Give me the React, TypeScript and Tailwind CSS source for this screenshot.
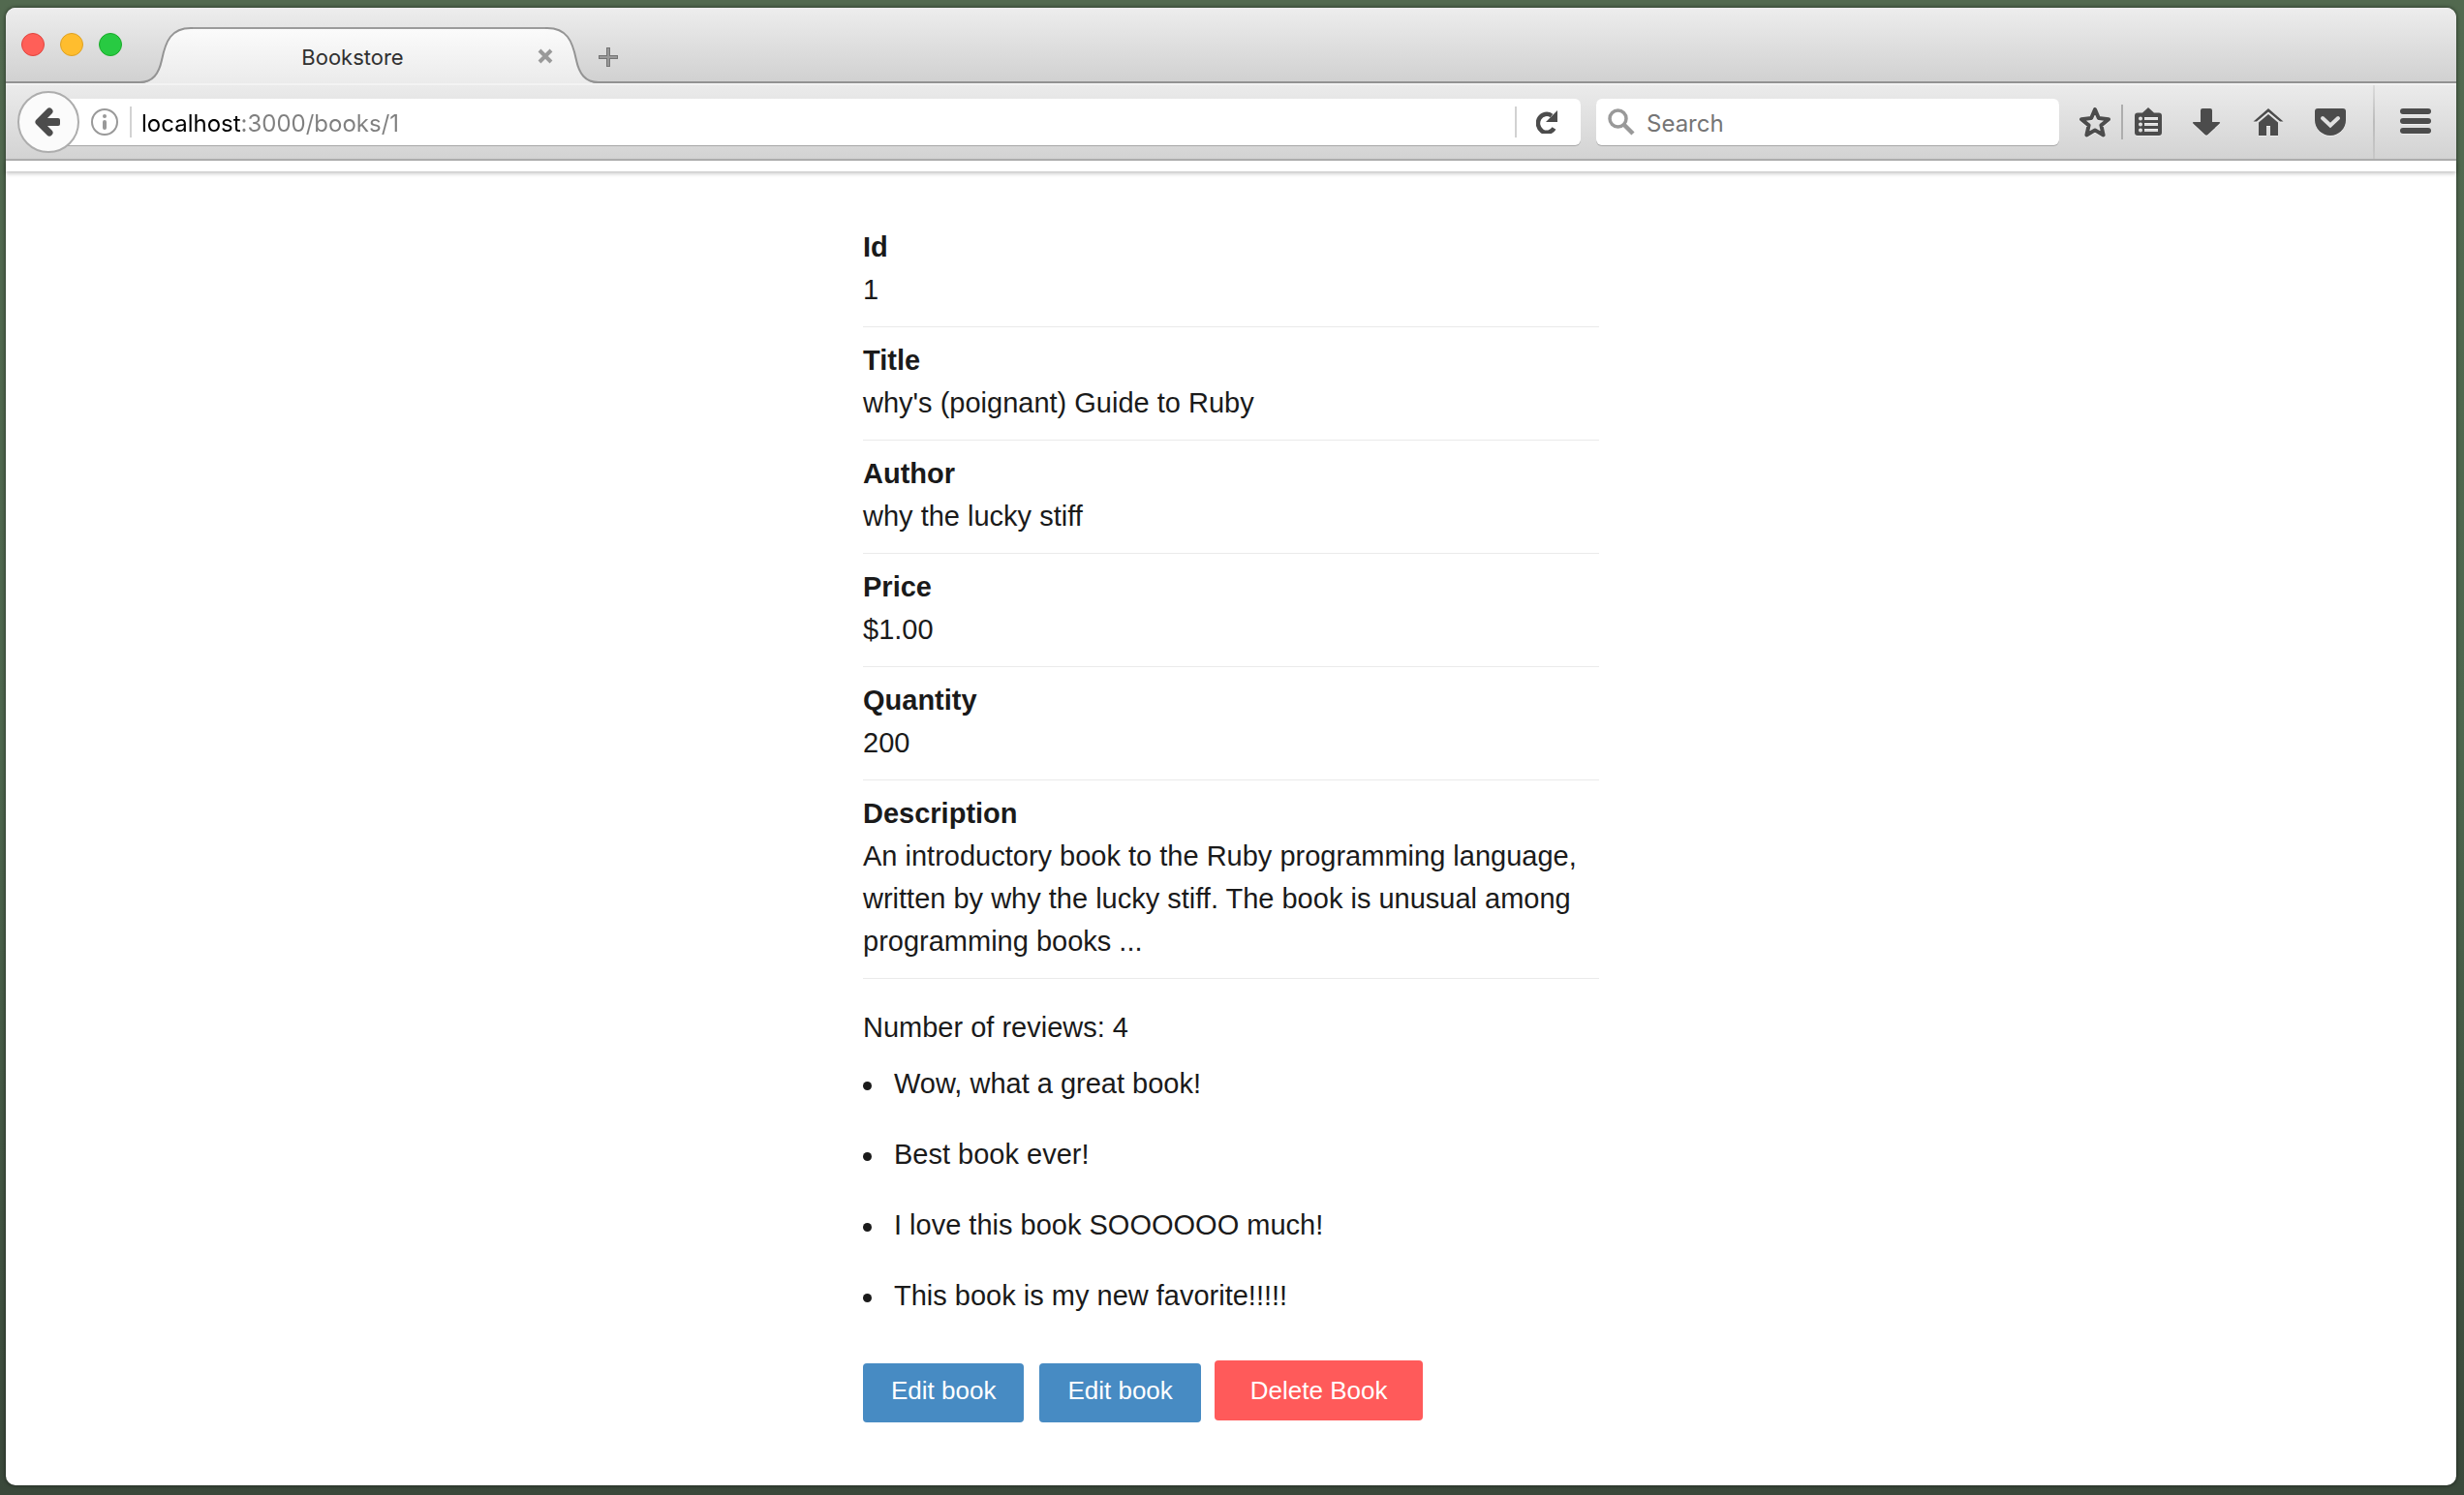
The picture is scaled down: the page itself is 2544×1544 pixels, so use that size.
import type { ReactNode } from "react";

const fields = [
  { label: "Id", value: "1" },
  { label: "Title", value: "why's (poignant) Guide to Ruby" },
  { label: "Author", value: "why the lucky stiff" },
  { label: "Price", value: "$1.00" },
  { label: "Quantity", value: "200" },
  {
    label: "Description",
    value:
      "An introductory book to the Ruby programming language, written by why the lucky stiff. The book is unusual among programming books ...",
  },
];

const reviews = [
  "Wow, what a great book!",
  "Best book ever!",
  "I love this book SOOOOOO much!",
  "This book is my new favorite!!!!!",
];

function IconButton({ label, className, children }: { label: string; className: string; children: ReactNode }) {
  return (
    <button type="button" aria-label={label} className={`flex h-8 w-8 shrink-0 items-center justify-center ${className}`}>
      <svg viewBox="0 0 32 32" className="h-8 w-8 text-[#4c4c4c] drop-shadow-[0_1px_0_rgba(255,255,255,0.5)]" fill="currentColor">
        {children}
      </svg>
    </button>
  );
}

function TabStrip() {
  return (
    <header className="flex h-[78px] items-end rounded-t-[10px] border-b-2 border-[#929292] bg-linear-to-b from-[#ededed] to-[#d1d1d1]">
      <div className="mb-[26px] ml-4 flex gap-4">
        <button type="button" aria-label="Close window" className="h-6 w-6 rounded-full border border-[#e0443e] bg-[#ff5f58]" />
        <button type="button" aria-label="Minimize window" className="h-6 w-6 rounded-full border border-[#dea123] bg-[#ffbd2e]" />
        <button type="button" aria-label="Zoom window" className="h-6 w-6 rounded-full border border-[#1aab29] bg-[#28ca42]" />
      </div>
      <div className="-mb-0.5 ml-[18px] flex h-[58px]">
        <TabEdge />
        <div className="z-10 flex w-[364px] items-center border-t-2 border-[#9b9b9b] bg-linear-to-b from-[#fbfbfb] to-[#ebebeb] font-[Inter,sans-serif]">
          <span className="flex-1 pt-0.5 pr-[26px] text-center text-[22px] leading-7 text-[#303030]">Bookstore</span>
          <button type="button" aria-label="Close tab" className="-mr-2 flex h-4 w-4 items-center justify-center">
            <svg viewBox="0 0 16 16" className="h-4 w-4" fill="none" stroke="#999" strokeWidth="4">
              <path d="M2 2l12 12M14 2L2 14" />
            </svg>
          </button>
        </div>
        <TabEdge flipped />
      </div>
      <button type="button" aria-label="New tab" className="mb-[15px] h-5 w-5">
        <svg viewBox="0 0 20 20" className="h-5 w-5">
          <path d="M8 0h4v8h8v4h-8v8H8v-8H0V8h8z" fill="#747474" />
          <path d="M9 1h2v8h8v2h-8v8H9v-8H1V9h8z" fill="#989898" />
        </svg>
      </button>
    </header>
  );
}

function TabEdge({ flipped = false }: { flipped?: boolean }) {
  return (
    <svg viewBox="0 0 55 58" className={flipped ? "h-[58px] w-[55px] -scale-x-100" : "h-[58px] w-[55px]"}>
      <defs>
        <linearGradient id={flipped ? "edge-right" : "edge-left"} x1="0" y1="0" x2="0" y2="1">
          <stop offset="0" stopColor="#fbfbfb" />
          <stop offset="1" stopColor="#ebebeb" />
        </linearGradient>
      </defs>
      <path
        d="M0 58C14 58 20 48 23 34C27 14 33 1 53 1H55V58Z"
        fill={flipped ? "url(#edge-right)" : "url(#edge-left)"}
      />
      <path d="M0 57C14 57 20 48 23 34C27 14 33 1 53 1H55" fill="none" stroke="#949494" strokeWidth="2" />
    </svg>
  );
}

function Toolbar() {
  return (
    <nav
      aria-label="Navigation"
      className="flex h-20 items-center border-t-2 border-b-2 border-t-[#f3f3f3] border-b-[#b0b0b0] bg-linear-to-b from-[#ebebeb] to-[#d3d3d3] pl-3 font-[Inter,sans-serif]"
    >
      <button
        type="button"
        aria-label="Back"
        className="z-10 flex h-16 w-16 shrink-0 items-center justify-center rounded-full border-2 border-[#adadad] bg-[#fbfbfb]"
      >
        <svg viewBox="2 0 28 32" className="h-8 w-7" fill="none" stroke="#4c4c4c">
          <rect x="8" y="12" width="20" height="8" rx="2" fill="#4c4c4c" stroke="none" />
          <path d="M17 5L6 16L17 27" strokeWidth="7" strokeLinecap="round" strokeLinejoin="round" />
        </svg>
      </button>
      <form
        onSubmit={(e) => e.preventDefault()}
        className="-ml-8 flex h-12 min-w-0 flex-1 items-center rounded-r-md bg-white pl-11 shadow-[0_1px_0_#a6a6a6]"
      >
        <button type="button" aria-label="Site information" className="h-7 w-7 shrink-0">
          <svg viewBox="0 0 28 28" className="h-7 w-7" fill="none" stroke="#999">
            <circle cx="14" cy="14" r="13" strokeWidth="2" />
            <circle cx="14" cy="8" r="2" fill="#999" stroke="none" />
            <path d="M14 14v6" strokeWidth="4" strokeLinecap="round" />
          </svg>
        </button>
        <span className="ml-3 h-8 w-0.5 bg-[#d2d2d2]" />
        <input
          aria-label="Address"
          defaultValue="localhost:3000/books/1"
          className="ml-[10px] h-10 min-w-0 flex-1 bg-linear-to-r from-black from-[103px] to-[#7f7f7f] to-[103px] bg-clip-text pt-0.5 text-2xl text-transparent outline-none"
        />
        <span className="h-8 w-0.5 bg-[#d2d2d2]" />
        <button type="button" aria-label="Reload" className="ml-5 mr-6 h-6 w-[22px]">
          <svg viewBox="0 0 22 24" className="h-6 w-[22px]">
            <path d="M18.500 18.500A9 9.500 0 1 1 16 5.500" fill="none" stroke="#4c4c4c" strokeWidth="4.500" />
            <path d="M22 0V12H10Z" fill="#4c4c4c" />
          </svg>
        </button>
      </form>
      <label className="ml-4 flex h-12 w-[478px] items-center rounded-md bg-white pl-3 shadow-[0_1px_0_#a6a6a6]">
        <svg viewBox="0 0 28 28" className="h-7 w-7 shrink-0" fill="none" stroke="#999">
          <circle cx="10.500" cy="10.500" r="8.500" strokeWidth="3.500" />
          <path d="M16.500 16.500L26 26" strokeWidth="4.500" />
        </svg>
        <input
          type="search"
          aria-label="Search"
          placeholder="Search"
          className="ml-3 h-10 min-w-0 flex-1 pt-0.5 text-2xl outline-none placeholder:text-[#757575]"
        />
      </label>
      <IconButton label="Bookmark this page" className="ml-[21px]">
        <path
          d="M16 3L19.800 12L30 13.200L22.400 19.400L24.600 29.500L16 24.400L7.400 29.500L9.600 19.400L2 13.200L12.200 12Z"
          fill="none"
          stroke="currentColor"
          strokeWidth="4"
          strokeLinejoin="round"
        />
      </IconButton>
      <span className="ml-[11px] h-9 w-0.5 bg-[#adadad]" />
      <IconButton label="Show bookmarks" className="ml-2.5">
        <path
          fillRule="evenodd"
          d="M16 1L22 6.500H27Q30 6.500 30 9.500V27Q30 30 27 30H5Q2 30 2 27V9.500Q2 6.500 5 6.500H10ZM12 11V14H26V11ZM12 17V20H26V17ZM12 23V26H26V23ZM8 10.500A2 2 0 1 0 8 14.500A2 2 0 1 0 8 10.500ZM8 16.500A2 2 0 1 0 8 20.500A2 2 0 1 0 8 16.500ZM8 22.500A2 2 0 1 0 8 26.500A2 2 0 1 0 8 22.500Z"
        />
      </IconButton>
      <IconButton label="Downloads" className="ml-7">
        <path d="M12 2H20Q22 2 22 4V16H29Q31 16 29.500 17.800L17.500 29Q16 30.500 14.500 29L2.500 17.800Q1 16 3 16H10V4Q10 2 12 2Z" />
      </IconButton>
      <IconButton label="Home" className="ml-8">
        <path d="M16 2L31.500 15.500H28L16 5.500L4 15.500H0.500Z" />
        <path d="M16 8L26 16.500V30H18V20H14V30H6V16.500Z" />
      </IconButton>
      <IconButton label="Save to Pocket" className="ml-8">
        <path d="M3 2H29Q32 2 32 5V14A16 16 0 0 1 0 14V5Q0 2 3 2Z" />
        <path d="M8 12L16 19.500L24 12" fill="none" stroke="#e0e0e0" strokeWidth="4" strokeLinecap="round" />
      </IconButton>
      <span className="ml-7 h-full w-0.5 bg-linear-to-b from-[#dcdcdc] via-[#bcbcbc] to-[#c8c8c8]" />
      <IconButton label="Open menu" className="ml-[26px] mr-[26px]">
        <rect y="2" width="32" height="6" rx="3" />
        <rect y="12" width="32" height="6" rx="3" />
        <rect y="22" width="32" height="6" rx="3" />
      </IconButton>
    </nav>
  );
}

function BookPage() {
  return (
    <main className="mx-auto w-[760px] max-w-full pt-11 text-[29px] leading-[44px] text-[#1a1a1a]">
      <dl>
        {fields.map((field) => (
          <div key={field.label} className="border-b border-[#eaeaea] pt-3 pb-4">
            <dt className="font-bold">{field.label}</dt>
            <dd>{field.value}</dd>
          </div>
        ))}
      </dl>
      <p className="mt-7">Number of reviews: 4</p>
      <ul className="mt-[14px] flex flex-col gap-[29px]">
        {reviews.map((review) => (
          <li key={review} className="flex items-center">
            <span className="mr-[23px] mt-1 h-[9px] w-[9px] rounded-full bg-[#1a1a1a]" />
            {review}
          </li>
        ))}
      </ul>
      <div className="mt-[45px] flex items-start text-[26px] leading-8 text-white">
        <a href="#edit" className="mt-[3px] mr-4 rounded-[4px] bg-[#478bc3] px-[29px] pt-3 pb-[17px]">
          Edit book
        </a>
        <a href="#edit" className="mt-[3px] mr-[14px] rounded-[4px] bg-[#478bc3] px-[29px] pt-3 pb-[17px]">
          Edit book
        </a>
        <button type="button" className="rounded-[4px] bg-[#ff5a5a] px-[37px] py-[15px]">
          Delete Book
        </button>
      </div>
    </main>
  );
}

export default function App() {
  return (
    <div className="flex min-h-screen flex-col bg-linear-to-b from-[#52694f] via-[#4d664d] to-[#3a483a] pt-2 pr-2 pb-2.5 pl-1.5 font-['Liberation_Sans',Arial,sans-serif]">
      <div className="flex flex-1 flex-col rounded-[10px] bg-white shadow-[0_0_4px_rgba(0,0,0,0.6)]">
        <TabStrip />
        <Toolbar />
        <div className="h-[11px] shadow-[0_2px_4px_rgba(0,0,0,0.25)]" />
        <BookPage />
      </div>
    </div>
  );
}
